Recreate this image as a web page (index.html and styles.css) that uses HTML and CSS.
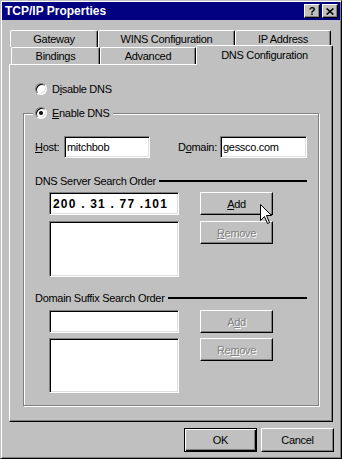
FILE: index.html
```html
<!DOCTYPE html>
<html lang="en">
<head>
  <meta charset="UTF-8" />
  <title>TCP/IP Properties</title>
  <link rel="stylesheet" href="styles.css">
</head>
<body>

  <div class="window">
    <!-- Title bar -->
    <div class="titlebar">
      <span class="title">TCP/IP Properties</span>
      <div class="title-buttons">
        <span class="tbtn help">?</span>
        <span class="tbtn close">
          <svg width="8" height="7" viewBox="0 0 8 7"><path d="M0.6 0.5 L7.4 6.5 M7.4 0.5 L0.6 6.5" stroke="#000" stroke-width="1.6" fill="none"/></svg>
        </span>
      </div>
    </div>

    <div class="dialog">
      <!-- Tabs -->
      <div class="tab-row back">
        <div class="tab tab-gateway">Gateway</div>
        <div class="tab tab-wins">WINS Configuration</div>
        <div class="tab tab-ip">IP Address</div>
      </div>
      <div class="tab-row front">
        <div class="tab tab-bindings">Bindings</div>
        <div class="tab tab-advanced">Advanced</div>
        <div class="tab tab-dns selected">DNS Configuration</div>
      </div>

      <div class="panel">
        <div class="option">
          <span class="radio"></span>
          <span>D<u>i</u>sable DNS</span>
        </div>

        <div class="group">
          <div class="legend">
            <span class="radio checked"></span>
            <span><u>E</u>nable DNS</span>
          </div>

          <div class="field-row">
            <span class="label-host"><u>H</u>ost:</span>
            <div class="input host">mitchbob</div>
            <span class="label-domain">D<u>o</u>main:</span>
            <div class="input domain">gessco.com</div>
          </div>

          <div class="section">
            <span>DNS Server Search Order</span>
            <span class="rule"></span>
          </div>
          <div class="order">
            <div class="col">
              <div class="input ip">200 . 31 . 77 .101</div>
              <div class="input list"></div>
            </div>
            <div class="col">
              <div class="btn"><u>A</u>dd</div>
              <div class="btn disabled"><u>R</u>emove</div>
            </div>
          </div>

          <div class="section second">
            <span>Domain Suffix Search Order</span>
            <span class="rule"></span>
          </div>
          <div class="order second">
            <div class="col">
              <div class="input entry"></div>
              <div class="input list short"></div>
            </div>
            <div class="col">
              <div class="btn disabled">A<u>d</u>d</div>
              <div class="btn disabled">Re<u>m</u>ove</div>
            </div>
          </div>
        </div>
      </div>

      <div class="footer">
        <div class="btn big default">OK</div>
        <div class="btn big">Cancel</div>
      </div>
    </div>

    <!-- mouse pointer over the Add button -->
    <svg class="cursor" width="13" height="21" viewBox="0 0 13 21">
      <path d="M0.5 0.5 L0.5 16.5 L4.5 12.5 L7.5 19.5 L9.5 18.5 L6.5 11.5 L11.5 11.5 Z" fill="#fff" stroke="#000" stroke-width="1"/>
    </svg>
  </div>

</body>
</html>
```

FILE: styles.css
```css
* { box-sizing: border-box; }

body {
  margin: 0;
  background: #c0c0c0;
  font-family: "Liberation Sans", Arial, sans-serif;
  font-size: 11px;
  letter-spacing: -0.3px;
  color: #000;
}

u { text-underline-offset: 1px; }

.window {
  position: relative;
  width: 342px;
  height: 459px;
  padding: 1px;
  background: #c0c0c0;
  border: 1px solid;
  border-color: #c0c0c0 #000 #000 #c0c0c0;
  box-shadow: inset 1px 1px #fff, inset -1px -1px #808080;
}

/* title bar */
.titlebar {
  height: 18px;
  background: #000080;
  color: #fff;
  display: flex;
  align-items: center;
  justify-content: space-between;
  padding: 0 2px 0 3px;
}

.title {
  font-weight: bold;
  font-size: 12px;
  letter-spacing: 0;
}

.title-buttons {
  display: flex;
  gap: 2px;
}

.tbtn {
  width: 16px;
  height: 14px;
  background: #c0c0c0;
  color: #000;
  font-weight: bold;
  font-size: 11px;
  display: flex;
  align-items: center;
  justify-content: center;
  border: 1px solid;
  border-color: #fff #000 #000 #fff;
  box-shadow: inset -1px -1px #808080;
}

.dialog {
  padding: 10px 0 0 7px;
}

/* tabs */
.tab-row {
  display: flex;
  height: 17px;
}

.tab-row.back { margin-left: 1px; }
.tab-row.front {
  margin-left: 2px;
  align-items: flex-end;
}

.tab {
  height: 17px;
  padding-top: 2px;
  text-align: center;
  background: #c0c0c0;
  border: 1px solid;
  border-bottom: none;
  border-color: #fff #000 transparent #fff;
  border-radius: 2px 2px 0 0;
  box-shadow: inset -1px 0 #808080;
}

.tab-gateway { width: 88px; }
.tab-wins { width: 137px; }
.tab-ip { width: 96px; }
.tab-bindings { width: 89px; }
.tab-advanced { width: 96px; }

.tab.selected {
  width: 137px;
  height: 20px;
  margin-bottom: -1px;
  padding-top: 3px;
  position: relative;
  z-index: 1;
}

.panel {
  width: 324px;
  height: 358px;
  padding: 18px 13px 0;
  border: 1px solid;
  border-color: #fff #000 #000 #fff;
  box-shadow: inset -1px -1px #808080;
}

/* radio buttons */
.option,
.legend {
  display: flex;
  align-items: center;
  gap: 5px;
  height: 12px;
}

.option { margin-left: 12px; }

.radio {
  position: relative;
  width: 12px;
  height: 12px;
  border-radius: 50%;
  background: #fff;
  border: 1px solid;
  border-color: #808080 #fff #fff #808080;
  box-shadow: inset 1px 1px #000, inset -1px -1px #dfdfdf;
}

.radio.checked::after {
  content: "";
  position: absolute;
  left: 3px;
  top: 3px;
  width: 4px;
  height: 4px;
  border-radius: 50%;
  background: #000;
}

/* group box */
.group {
  margin-top: 18px;
  height: 293px;
  padding: 0 11px;
  border: 1px solid #808080;
  box-shadow: inset 1px 1px #fff, 1px 1px #fff;
}

.legend {
  width: max-content;
  margin: -7px 0 0 -2px;
  padding: 0 3px 0 2px;
  background: #c0c0c0;
}

.field-row {
  display: flex;
  align-items: center;
  height: 22px;
  margin-top: 17px;
}

.label-host { width: 29px; }
.label-domain {
  width: 42px;
  margin-left: 28px;
}

.input {
  background: #fff;
  height: 22px;
  padding: 0 2px;
  display: flex;
  align-items: center;
  border: 1px solid;
  border-color: #808080 #fff #fff #808080;
  box-shadow: inset 1px 1px #000, inset -1px -1px #dfdfdf;
}

.input.host { width: 86px; }
.input.domain { width: 87px; }

.section {
  display: flex;
  align-items: center;
  height: 13px;
  margin-top: 16px;
}

.section.second { margin-top: 14px; }

.rule {
  flex: 1;
  height: 2px;
  margin-left: 3px;
  background: #000;
}

.order {
  display: flex;
  gap: 21px;
  margin-top: 5px;
  padding-left: 14px;
}

.order.second { margin-top: 6px; }

.order .col {
  display: flex;
  flex-direction: column;
  gap: 6px;
}

.order.second .col { gap: 5px; }

.input.ip,
.input.entry,
.input.list {
  width: 130px;
  height: 23px;
}

.input.ip {
  padding-left: 3px;
  font-weight: bold;
  font-size: 12px;
  letter-spacing: 1.2px;
  white-space: pre;
}

.input.list { height: 56px; }
.input.list.short { height: 55px; }

/* push buttons */
.btn {
  width: 73px;
  height: 23px;
  display: flex;
  align-items: center;
  justify-content: center;
  background: #c0c0c0;
  border: 1px solid;
  border-color: #fff #000 #000 #fff;
  box-shadow: inset -1px -1px #808080;
}

.btn.disabled {
  color: #808080;
  text-shadow: 1px 1px #fff;
}

.footer {
  display: flex;
  justify-content: flex-end;
  gap: 4px;
  margin-top: 6px;
  padding-right: 6px;
}

.btn.big { height: 24px; }

.btn.default {
  border-color: #000;
  box-shadow: inset 1px 1px #fff, inset -1px -1px #000, inset -2px -2px #808080;
}

.cursor {
  position: absolute;
  left: 259px;
  top: 203px;
}
```
